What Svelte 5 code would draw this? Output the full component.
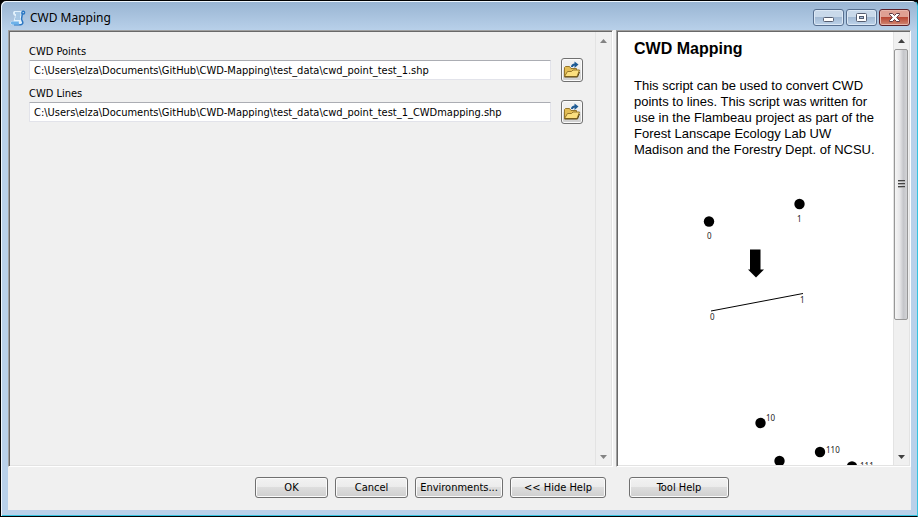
<script>
  let points = $state('C:\\Users\\elza\\Documents\\GitHub\\CWD-Mapping\\test_data\\cwd_point_test_1.shp');
  let lines = $state('C:\\Users\\elza\\Documents\\GitHub\\CWD-Mapping\\test_data\\cwd_point_test_1_CWDmapping.shp');
</script>

{#snippet folder()}
  <svg width="18" height="18" viewBox="0 0 18 18" aria-hidden="true">
    <path d="M1.500 15.500V6.500l1-1h4l1.500 2h5.500v8z" fill="#e3bd55" stroke="#96762a" />
    <path d="M1.500 15.500l3-5h4l1.500-1.500h6.500l-2.500 6.500z" fill="#fbdf7e" stroke="#96762a" stroke-linejoin="round" />
    <path d="M1.500 16h13l2-5" fill="none" stroke="#5c470f" />
    <path d="M9 6c0-2 1-2.500 3-2.500" fill="none" stroke="#1d5a94" stroke-width="2" />
    <path d="M11.500 .5l4 3-4 3.500z" fill="#1d5a94" />
  </svg>
{/snippet}

{#snippet scrollbar(active)}
  <div class="scrollbar" class:active>
    <svg class="arrow" width="7" height="4" viewBox="0 0 7 4" aria-hidden="true"><path d="M0 4L3.500 0 7 4z" /></svg>
    {#if active}
      <div class="track"><div class="thumb"><i></i><i></i><i></i></div></div>
    {/if}
    <svg class="arrow" width="7" height="4" viewBox="0 0 7 4" aria-hidden="true"><path d="M0 0h7L3.500 4z" /></svg>
  </div>
{/snippet}

<main class="window">
  <header>
    <svg width="16" height="16" viewBox="0 0 16 16" aria-hidden="true">
      <path d="M3 3C3 1.500 4 1 5 1h9c1 0 1.500 1 1 2s-1.500 1-2.500.8L11.500 9l1.500 3c.5 2-1 3-2.500 3H3c-2 0-3-1-2.500-2.500.3-1 1.500-1.200 3-1L5 6c-1-.5-2-1.500-2-3z" fill="#e2f1fc" />
      <path d="M12 4c-.5-1.800.3-3 1.500-2.800 1.500.3 1.500 2.600-.2 2.800l-1 .2-.8 5 1.300 3c.3 1.500-1 2.600-2.500 2.600H4" fill="none" stroke="#2a76c2" stroke-width="1.500" />
      <path d="M.8 12.800C1 11.500 2.500 11.300 4 11.500h5c-.7 1 0 2.800 1 3.200H3c-1.500 0-2.500-.8-2.200-1.900z" fill="#6db2ea" />
      <path d="M5 3h5.500M6 5h4.500M5.500 7h4.500M5 9h5" stroke="#6f9fce" />
    </svg>
    <h1>CWD Mapping</h1>
    <div class="controls">
      <button aria-label="Minimize">
        <svg width="13" height="11" viewBox="0 0 13 11"><rect x="1.500" y="5.500" width="10" height="4" rx="1" fill="#fff" stroke="#555d70" /></svg>
      </button>
      <button aria-label="Maximize">
        <svg width="13" height="11" viewBox="0 0 13 11"><rect x="1.500" y="1.500" width="10" height="8" rx="1" fill="#fff" stroke="#555d70" /><rect x="4.500" y="4.500" width="4" height="2" fill="#a9c0dc" stroke="#555d70" /></svg>
      </button>
      <button class="close" aria-label="Close">
        <svg width="13" height="11" viewBox="0 0 13 11"><path d="M1.500 1.500h3l2 2 2-2h3v1L8.700 5.500l2.800 3v1h-3l-2-2-2 2h-3v-1l2.800-3-2.800-3z" fill="#fff" stroke="#5b3540" /></svg>
      </button>
    </div>
  </header>

  <div class="body">
    <section class="pane form-pane">
      <form id="tool" onsubmit={(e) => e.preventDefault()}>
        <label for="points">CWD Points</label>
        <div class="row">
          <input id="points" type="text" bind:value={points} spellcheck="false" />
          <button type="button" class="browse" aria-label="Browse for CWD Points">{@render folder()}</button>
        </div>
        <label for="lines">CWD Lines</label>
        <div class="row">
          <input id="lines" type="text" bind:value={lines} spellcheck="false" />
          <button type="button" class="browse" aria-label="Browse for CWD Lines">{@render folder()}</button>
        </div>
      </form>
      {@render scrollbar(false)}
    </section>

    <section class="pane help-pane">
      <article>
        <h2>CWD Mapping</h2>
        <p>This script can be used to convert CWD points to lines. This script was written for use in the Flambeau project as part of the Forest Lanscape Ecology Lab UW Madison and the Forestry Dept. of NCSU.</p>
        <svg class="figure" width="258" height="320" viewBox="0 0 258 320">
          <circle cx="75" cy="63.500" r="5.200" />
          <circle cx="165.500" cy="46" r="5.200" />
          <text x="73" y="81">0</text>
          <text x="163" y="64">1</text>
          <path d="M116 91.500h10.500v20h3.500l-8 8-8-8h2z" />
          <path d="M77 153L169 135.500" stroke="#000" />
          <text x="76" y="162">0</text>
          <text x="166" y="145">1</text>
          <circle cx="126.500" cy="265" r="5.200" />
          <text x="132" y="263">10</text>
          <circle cx="145.500" cy="303" r="5.200" />
          <circle cx="186" cy="294" r="5.200" />
          <text x="192" y="295">110</text>
          <circle cx="218" cy="308.500" r="5.200" />
          <text x="226" y="311">111</text>
        </svg>
      </article>
      {@render scrollbar(true)}
    </section>
  </div>

  <footer>
    <div class="actions">
      <button form="tool" class="push">OK</button>
      <button type="button" class="push">Cancel</button>
      <button type="button" class="push environments">Environments...</button>
      <button type="button" class="push hide">&lt;&lt; Hide Help</button>
    </div>
    <div class="help-actions">
      <button type="button" class="push tool-help">Tool Help</button>
    </div>
  </footer>
</main>

<style>
  :global(body) { margin: 0; background: #000; }
  * { box-sizing: border-box; }
  .window {
    height: 100vh;
    display: flex;
    flex-direction: column;
    padding: 0 6px 6px;
    border: 1px solid #000;
    border-right-color: #35c3e0;
    border-bottom-color: #000;
    border-radius: 6px 6px 0 0;
    box-shadow: inset 1px 1px #eef6fd, inset 0 -1px #35c3e0;
    background: linear-gradient(#98b4d2, #b9d1ea 30px, #b9d1ea);
    font: 11px/14px "DejaVu Sans Condensed", "DejaVu Sans", sans-serif;
    color: #000;
  }
  header { flex: none; height: 29px; display: flex; align-items: center; padding: 4px 1px 0 3px; gap: 4px; }
  h1 { margin: 0; flex: 1; font: 12px/16px "Noto Sans", sans-serif; }
  .controls { display: flex; gap: 2px; align-self: flex-start; margin-top: 4px; }
  .controls button {
    width: 31px; height: 17px; padding: 0;
    display: flex; align-items: center; justify-content: center;
    border: 1px solid #576f8f; border-radius: 3px;
    background: linear-gradient(#c9d9ea 45%, #a3bad4 50%, #bdd3ea);
    box-shadow: inset 0 0 0 1px #dce8f5;
  }
  .controls .close {
    border-color: #5d2029;
    background: linear-gradient(#dfa093 45%, #b94835 50%, #d08773);
    box-shadow: inset 0 0 0 1px #e7b5ab;
  }
  .body, footer { display: grid; grid-template-columns: minmax(0, 1fr) 295px; column-gap: 3px; background: #f0f0f0; margin-left: 1px; }
  .body { flex: 1; min-height: 0; }
  .pane {
    min-height: 0;
    display: flex;
    border: 1px solid;
    border-color: #a0a0a0 #fff #fff #a0a0a0;
    box-shadow: inset 1px 1px #696969, inset -1px -1px #e3e3e3;
    padding: 1px;
    overflow: hidden;
  }
  form { flex: 1; min-width: 0; padding: 12px 12px 0 19px; }
  label { display: block; line-height: 16px; height: 14px; }
  .row { display: flex; align-items: center; gap: 10px; margin-bottom: 4px; }
  input {
    flex: 1; min-width: 0; height: 20px; padding: 0 4px;
    border: 1px solid #e2e3ea; border-top-color: #abadb3; border-radius: 1px;
    background: #fff; font: inherit; color: #000;
  }
  .browse, .push {
    border: 1px solid #707070; border-radius: 3px;
    background: linear-gradient(#f2f2f2, #ebebeb 50%, #dddddd 50%, #cfcfcf);
    box-shadow: inset 0 0 0 1px #fbfbfb;
    font: inherit; color: #000;
  }
  .browse { flex: none; width: 22px; height: 24px; padding: 0; display: flex; align-items: center; justify-content: center; }
  .help-pane { background: #fff; }
  article { flex: 1; min-width: 0; padding: 8px 0 0 16px; font: 13px/16px "Liberation Sans", Arial, sans-serif; overflow: hidden; }
  h2 { margin: 0 0 20px; font-size: 16px; line-height: 18px; }
  article p { margin: 0; padding-right: 12px; }
  .figure { display: block; font: 8px "Noto Sans", sans-serif; }
  .figure text { fill: #222; }
  .scrollbar {
    flex: none; width: 16px; padding: 7px 0 6px;
    display: flex; flex-direction: column; align-items: center; justify-content: space-between;
    background: #f0f0f0; border-left: 1px solid #e3e3e3;
  }
  .arrow { flex: none; fill: #838383; }
  .active .arrow { fill: #404040; }
  .track { flex: 1; align-self: stretch; padding: 6px 1px 8px 0; }
  .thumb {
    height: 68%;
    border: 1px solid #979797; border-radius: 2px;
    background: linear-gradient(90deg, #f5f5f5, #e6e6e8 40%, #c5c6ca 70%, #d2d3d6);
    display: flex; flex-direction: column; align-items: center; justify-content: center; gap: 1px;
  }
  .thumb i { width: 7px; height: 2px; background: #444; border-bottom: 1px solid #aaa; }
  footer { flex: none; height: 43px; padding-top: 10px; }
  .actions { display: flex; justify-content: flex-end; align-items: flex-start; gap: 7px; padding-right: 7px; }
  .help-actions { padding-left: 13px; }
  .push { width: 73px; height: 21px; padding: 0; white-space: nowrap; }
  .environments { width: 88px; }
  .hide { width: 96px; }
  .tool-help { width: 100px; }
</style>
